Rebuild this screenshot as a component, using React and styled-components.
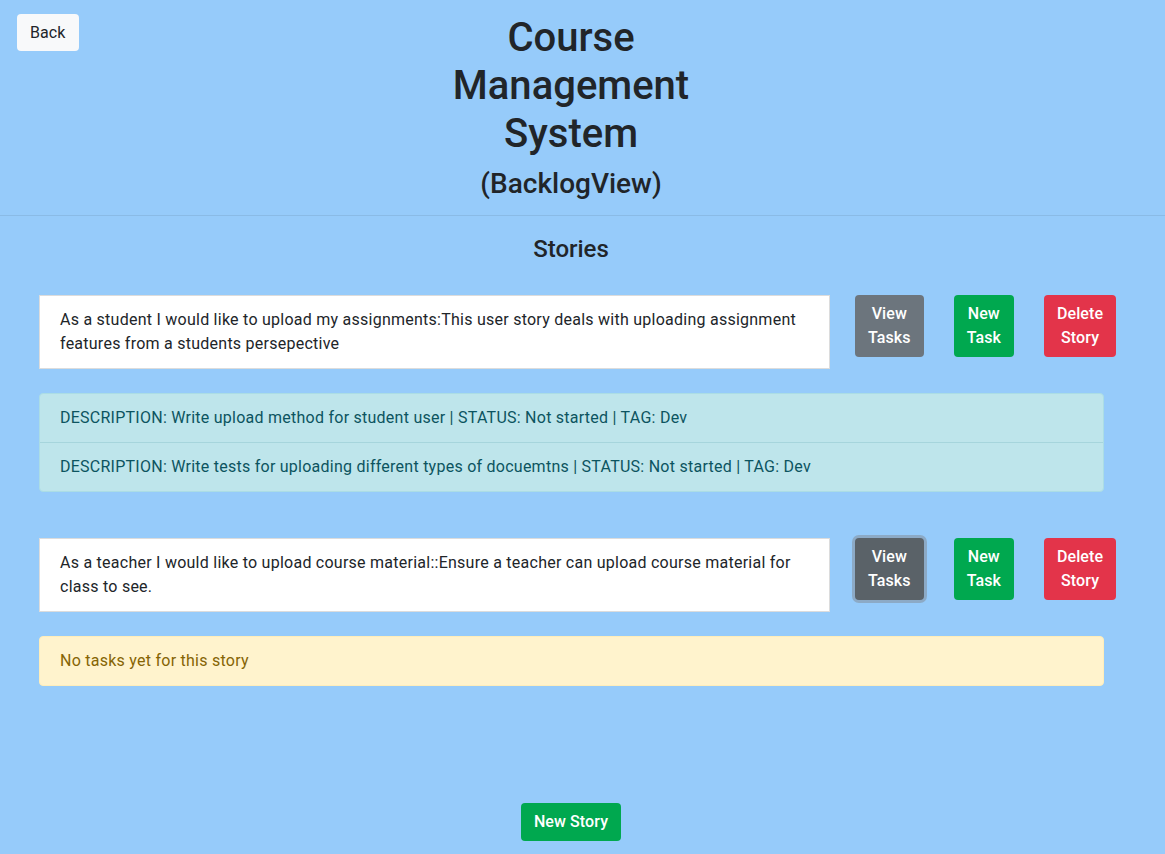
import React from 'react'
import styled, { createGlobalStyle, css } from 'styled-components'

const GlobalStyle = createGlobalStyle`
  html, body {
    margin: 0;
    padding: 0;
    background: #96cbfa;
  }
  body {
    font-family: Roboto, "Liberation Sans", sans-serif;
    color: #212529;
    font-size: 16px;
    line-height: 1.5;
    letter-spacing: 0.25px;
    min-height: 854px;
  }
`

const Page = styled.div`
  min-height: 854px;
  padding-right: 23px;
  box-sizing: border-box;
  display: flex;
  flex-direction: column;
`

const Header = styled.header`
  display: grid;
  grid-template-columns: 1fr auto 1fr;
  align-items: start;
  padding: 14px 23px 14px 0;
  margin-right: -23px;
  border-bottom: 1px solid rgba(0, 0, 0, 0.08);
`

const Title = styled.div`
  grid-column: 2;
  text-align: center;
  width: 250px;
  letter-spacing: 0;
`

const H1 = styled.h1`
  margin: 0;
  font-size: 40px;
  font-weight: 500;
  line-height: 48px;
`

const H3 = styled.h3`
  margin: 9px 0 0;
  font-size: 28px;
  font-weight: 500;
  line-height: 34px;
`

const variants = {
  light: css`
    background: #f8f9fa;
    color: #212529;
    font-weight: 400;
  `,
  gray: css`
    background: #6c757d;
    color: #fff;
  `,
  grayActive: css`
    background: #5a6268;
    color: #fff;
    box-shadow: 0 0 0 3px rgba(130, 138, 145, 0.5);
  `,
  green: css`
    background: #00a84f;
    color: #fff;
  `,
  red: css`
    background: #e3344a;
    color: #fff;
  `,
}

const Button = styled.button`
  font-family: inherit;
  font-size: 16px;
  font-weight: 500;
  line-height: 24px;
  letter-spacing: 0.1px;
  border: 1px solid transparent;
  border-radius: 4px;
  padding: 6px 12px;
  cursor: pointer;
  ${(p) => variants[p.$variant]}
`

const BackButton = styled(Button)`
  grid-column: 1;
  justify-self: start;
  margin-left: 17px;
  padding: 5.5px 12px;
`

const Stories = styled.main`
  flex: 1;
  display: flex;
  flex-direction: column;
`

const H4 = styled.h4`
  margin: 19px 0 31px;
  text-align: center;
  font-size: 24px;
  font-weight: 500;
  line-height: 29px;
  letter-spacing: 0;
`

const StoryBlock = styled.section`
  padding: 0 0 0 39px;
  margin-bottom: 46px;
`

const StoryRow = styled.div`
  display: flex;
  align-items: flex-start;
`

const StoryCard = styled.div`
  width: 791px;
  box-sizing: border-box;
  background: #fff;
  border: 1px solid #dcdcdc;
  padding: 12px 20px;
  margin-right: 25px;
`

const Actions = styled.div`
  display: flex;
  gap: 30px;
`

const StackButton = styled(Button)`
  text-align: center;
`

const TaskList = styled.ul`
  list-style: none;
  margin: 24px 0 0;
  padding: 0;
  width: 1065px;
  box-sizing: border-box;
  border-radius: 4px;
  overflow: hidden;
  border: 1px solid #abdde5;
  background: #bee5eb;
  color: #0c5460;
`

const TaskItem = styled.li`
  padding: 12px 20px;
  & + & {
    border-top: 1px solid #a6d5dc;
  }
`

const Alert = styled.div`
  margin-top: 24px;
  width: 1065px;
  box-sizing: border-box;
  padding: 12px 20px;
  background: #fff3cd;
  border: 1px solid #ffeeba;
  border-radius: 4px;
  color: #856404;
`

const Footer = styled.div`
  margin-top: auto;
  display: flex;
  justify-content: center;
  padding-bottom: 13px;
`

const stories = [
  {
    text: 'As a student I would like to upload my assignments:This user story deals with uploading assignment features from a students persepective',
    tasks: [
      'DESCRIPTION: Write upload method for student user | STATUS: Not started | TAG: Dev',
      'DESCRIPTION: Write tests for uploading different types of docuemtns | STATUS: Not started | TAG: Dev',
    ],
  },
  {
    text: 'As a teacher I would like to upload course material::Ensure a teacher can upload course material for class to see.',
    tasks: [],
    active: true,
  },
]

export default function App() {
  return (
    <>
      <GlobalStyle />
      <Page>
        <Header>
          <BackButton $variant="light">Back</BackButton>
          <Title>
            <H1>Course Management System</H1>
            <H3>(BacklogView)</H3>
          </Title>
        </Header>
        <Stories>
          <H4>Stories</H4>
          {stories.map((s, i) => (
            <StoryBlock key={i}>
              <StoryRow>
                <StoryCard>{s.text}</StoryCard>
                <Actions>
                  <StackButton $variant={s.active ? 'grayActive' : 'gray'}>View<br />Tasks</StackButton>
                  <StackButton $variant="green">New<br />Task</StackButton>
                  <StackButton $variant="red">Delete<br />Story</StackButton>
                </Actions>
              </StoryRow>
              {s.tasks.length ? (
                <TaskList>
                  {s.tasks.map((t, j) => <TaskItem key={j}>{t}</TaskItem>)}
                </TaskList>
              ) : (
                <Alert>No tasks yet for this story</Alert>
              )}
            </StoryBlock>
          ))}
        </Stories>
        <Footer>
          <Button $variant="green">New Story</Button>
        </Footer>
      </Page>
    </>
  )
}
